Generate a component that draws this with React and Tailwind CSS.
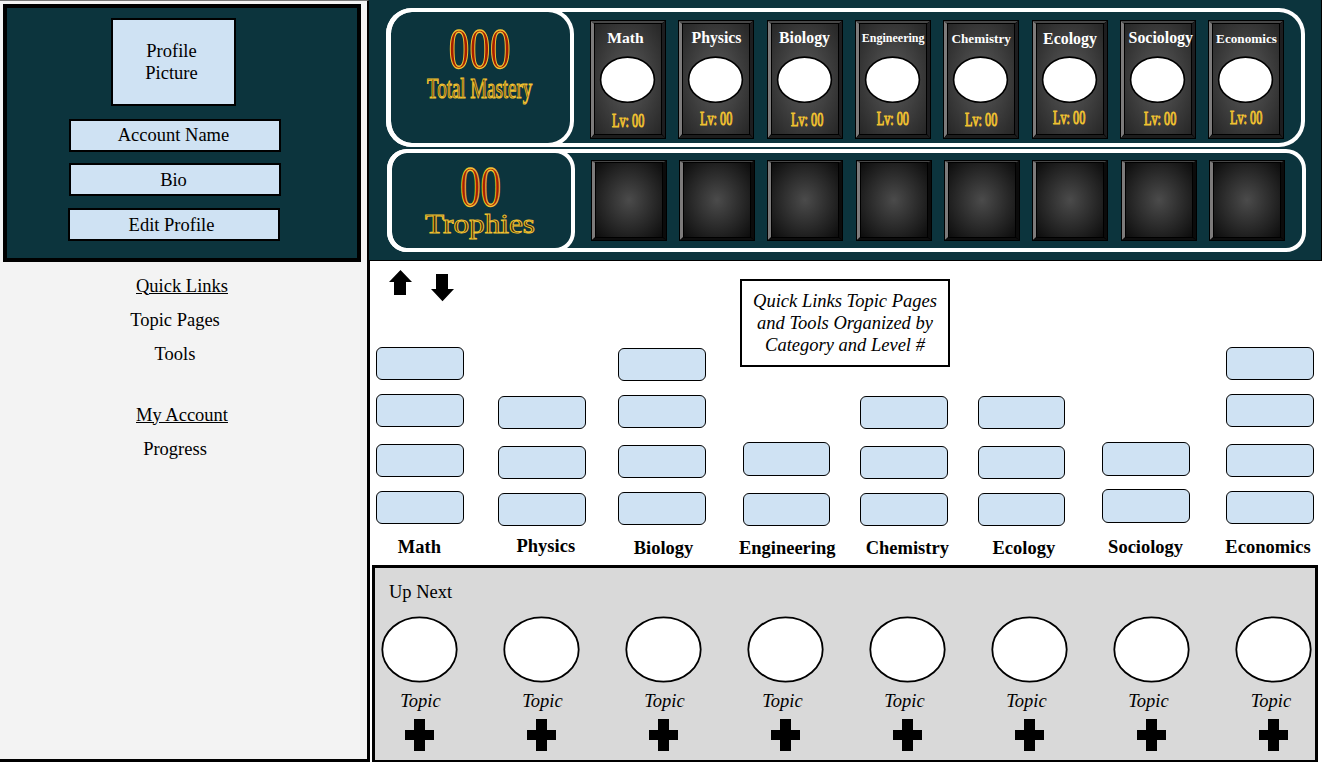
import React from "react";

const BOX = "border-2 border-black bg-[#cfe2f3] text-center";

const SUBJECTS = [
  { name: "Math", gap: "ml-0", label: "text-[15.6px] -left-[2.5px] top-0", lvX: 22, lvY: 106.5 },
  { name: "Physics", gap: "ml-[12px]", label: "text-[15.8px] left-[0.5px] top-0", lvX: 22, lvY: 105 },
  { name: "Biology", gap: "ml-[13px]", label: "text-[15.8px] -left-[0.5px] top-0", lvX: 24, lvY: 106 },
  { name: "Engineering", gap: "ml-[12px]", label: "text-[12px] left-[0.2px] top-0", lvX: 21.7, lvY: 105 },
  { name: "Chemistry", gap: "ml-[12px]", label: "text-[13.2px] left-[0.2px] top-[1px]", lvX: 22, lvY: 106 },
  { name: "Ecology", gap: "ml-[13px]", label: "text-[15.9px] left-0 top-[1px]", lvX: 21, lvY: 104 },
  { name: "Sociology", gap: "ml-[12px]", label: "text-[15.9px] left-[2.8px] top-0", lvX: 24, lvY: 105 },
  { name: "Economics", gap: "ml-[12px]", label: "text-[13.2px] left-[0.5px] top-[1px]", lvX: 22, lvY: 104 },
];

const TROPHY_GAPS = ["ml-0", "ml-[12px]", "ml-[12px]", "ml-[13px]", "ml-[12px]", "ml-[12px]", "ml-[13px]", "ml-[12px]"];

const LEVELS = [
  { name: "Math", col: "ml-0 w-[88px]", boxes: ["mt-0 h-[33px]", "mt-[14px] h-[33px]", "mt-[17px] h-[33px]", "mt-[14px] h-[33px]"], pad: "mb-[5px]", label: "-left-[0.6px] -top-[0.5px]" },
  { name: "Physics", col: "ml-[34px] w-[88px]", boxes: ["h-[33px]", "mt-[17px] h-[33px]", "mt-[14px] h-[33px]"], pad: "mb-[3px]", label: "left-[3.8px] -top-px" },
  { name: "Biology", col: "ml-[32px] w-[88px]", boxes: ["h-[33px]", "mt-[14px] h-[33px]", "mt-[17px] h-[33px]", "mt-[14px] h-[33px]"], pad: "mb-[4px]", label: "left-[1.5px] top-[0.5px]" },
  { name: "Engineering", col: "ml-[37px] w-[87px]", boxes: ["h-[34px]", "mt-[17px] h-[33px]"], pad: "mb-[3px]", label: "left-[0.7px] top-[0.5px]" },
  { name: "Chemistry", col: "ml-[30px] w-[88px]", boxes: ["h-[33px]", "mt-[17px] h-[33px]", "mt-[14px] h-[33px]"], pad: "mb-[3px]", label: "left-[3.3px] top-[0.5px]" },
  { name: "Ecology", col: "ml-[30px] w-[87px]", boxes: ["h-[33px]", "mt-[17px] h-[33px]", "mt-[14px] h-[33px]"], pad: "mb-[3px]", label: "left-[2.3px] top-[0.5px]" },
  { name: "Sociology", col: "ml-[37px] w-[88px]", boxes: ["h-[34px]", "mt-[13px] h-[34px]"], pad: "mb-[6px]", label: "-left-[0.4px] -top-[0.5px]" },
  { name: "Economics", col: "ml-[36px] w-[88px]", boxes: ["h-[33px]", "mt-[14px] h-[33px]", "mt-[17px] h-[33px]", "mt-[14px] h-[33px]"], pad: "mb-[5px]", label: "-left-[2px] -top-[0.5px]" },
];

const TOPIC_SHIFT = ["left-[0.5px]", "left-[0.5px]", "left-[0.5px]", "-left-[3.5px]", "-left-[3.5px]", "-left-[3.5px]", "-left-[3.5px]", "-left-[3px]"];

/* Stretched outline lettering: x/baseline in pixels, sx is the horizontal stretch. */
function WordArt({ x, y, size, sx, fill, sw = 1, children }) {
  return (
    <text
      transform={`translate(${x} ${y}) scale(${sx} 1)`}
      fontSize={size}
      fill={fill}
      stroke="#f1c232"
      strokeWidth={sw}
      vectorEffect="non-scaling-stroke"
      fontFamily="Liberation Serif, serif"
    >
      {children}
    </text>
  );
}

function Bevel({ w, h, t, id, inner, outer, children }) {
  const l = 4;
  return (
    <svg width={w} height={h} className="col-start-1 row-start-1 block">
      <defs>
        <radialGradient id={id} cx="50%" cy="50%" r="70%">
          <stop offset="0" stopColor={inner} />
          <stop offset="1" stopColor={outer} />
        </radialGradient>
      </defs>
      <rect width={w} height={h} fill="#000" />
      <polygon points={`1,1 ${w - 1},1 ${w - l - 1},${t} ${l},${t}`} fill="#474747" />
      <polygon points={`1,1 ${l},${t} ${l},${h - t - 1} 1,${h - 1}`} fill="#7d7b7b" />
      <polygon points={`${w - 1},1 ${w - 1},${h - 1} ${w - l},${h - t - 1} ${w - l},${t}`} fill={t === 4 ? "#1d1d1f" : "#0b0b0b"} />
      <polygon points={`1,${h - 1} ${l},${h - t} ${w - l},${h - t} ${w - 1},${h - 1}`} fill={t === 4 ? "#1c1c1c" : "#0d0d0d"} />
      <rect x={l + 0.5} y={t - 0.5} width={w - 2 * l - 1} height={h - 2 * t} fill={`url(#${id})`} stroke="#000" strokeWidth="1" />
      {children}
    </svg>
  );
}

function SubjectCard({ s }) {
  return (
    <div className={`grid h-[119px] w-[76px] shrink-0 ${s.gap}`}>
      <Bevel w={76} h={119} t={4} id={`card-${s.name}`} inner="#5a5a5a" outer="#262626">
        <ellipse cx="37.5" cy="59.7" rx="26.9" ry="22.6" fill="#fff" stroke="#000" strokeWidth="1.6" />
        <WordArt x={s.lvX} y={s.lvY} size={18} sx={0.68} fill="#d6a522" sw={0.9}>Lv: 00</WordArt>
      </Bevel>
      <div className={`relative col-start-1 row-start-1 flex h-[20px] justify-center pt-[8px] leading-[20px] font-bold whitespace-nowrap text-white ${s.label}`}>
        {s.name}
      </div>
    </div>
  );
}

function Sidebar() {
  return (
    <aside className="flex h-[762px] w-[370px] shrink-0 flex-col border-t border-r-[3px] border-b-[3px] border-t-[#777] border-r-black border-b-black bg-[#f3f3f3]">
      <div className="mt-[2.5px] ml-[3px] flex h-[258.5px] w-[358px] flex-col border-4 border-black bg-[#0c343d] pl-[61px] leading-[22px]">
        <div className={`${BOX} mt-[10px] ml-[43px] h-[88px] w-[125px] pt-[20px] pr-[4px]`}>
          Profile
          <br />
          Picture
        </div>
        <div className={`${BOX} mt-[13px] ml-px h-[33px] w-[212px] pt-[3px] pr-[3px]`}>Account Name</div>
        <div className={`${BOX} mt-[11px] ml-px h-[33px] w-[212px] pt-[4px] pr-[3px]`}>Bio</div>
        <div className={`${BOX} mt-[12px] h-[33px] w-[212px] pt-[4px] pr-[5px]`}>Edit Profile</div>
      </div>
      <nav className="flex w-[350px] flex-col text-center leading-[22px]">
        <a className="mt-[12.5px] pl-[14px] underline">Quick Links</a>
        <a className="mt-[12px]">Topic Pages</a>
        <a className="mt-[12px]">Tools</a>
        <a className="mt-[39px] pl-[14px] underline">My Account</a>
        <a className="mt-[12px]">Progress</a>
      </nav>
    </aside>
  );
}

function Header() {
  return (
    <header className="-ml-px h-[261px] w-[953px] border-r border-b border-black bg-[#0c343d] pt-[8px] pl-[17px]">
      <section className="flex h-[139px] w-[919px] rounded-[26px] border-4 border-l-[5px] border-white">
        <div className="-mx-[5px] -my-[4px] h-[139px] w-[188px] shrink-0 rounded-[26px] border-4 border-l-[5px] border-white">
          <svg width="179" height="131" className="block">
            <WordArt x={57.8} y={56} size={58} sx={0.71} fill="#a61c00" sw={1.15}>000</WordArt>
            <WordArt x={36} y={86.3} size={30} sx={0.63} fill="#5c3c08">Total Mastery</WordArt>
          </svg>
        </div>
        <div className="mt-[8px] ml-[21px] flex">
          {SUBJECTS.map((s) => (
            <SubjectCard key={s.name} s={s} />
          ))}
        </div>
      </section>
      <section className="mt-[2px] ml-px flex h-[103px] w-[919px] rounded-[20px] border-4 border-l-[5px] border-white">
        <div className="-mx-[5px] -my-[4px] h-[103px] w-[188px] shrink-0 rounded-[20px] border-4 border-l-[5px] border-white">
          <svg width="179" height="95" className="block">
            <WordArt x={68} y={53} size={56} sx={0.73} fill="#a61c00" sw={1.15}>00</WordArt>
            <WordArt x={33} y={80.3} size={26.5} sx={1.18} fill="#3f2b08">Trophies</WordArt>
          </svg>
        </div>
        <div className="mt-[7px] ml-[21px] flex">
          {TROPHY_GAPS.map((gap, i) => (
            <div key={i} className={`grid h-[81px] w-[76px] shrink-0 ${gap}`}>
              <Bevel w={76} h={81} t={3} id={`trophy-${i}`} inner="#4b4b4b" outer="#0c0c0c" />
            </div>
          ))}
        </div>
      </section>
    </header>
  );
}

function Levels() {
  return (
    <section className="flex h-[304px] flex-col bg-white pl-[6px]">
      <div className="flex h-[106px] items-start">
        <svg width="24" height="26" className="mt-[9px] ml-[13px] shrink-0">
          <polygon points="11.5,0 23,12 17,12 17,25 5,25 5,12 0,12" />
        </svg>
        <svg width="24" height="28" className="mt-[13px] ml-[18px] shrink-0">
          <polygon points="5,0 17,0 17,15 23,15 11.5,27.2 0,15 5,15" />
        </svg>
        <div className="mt-[18px] ml-[285px] h-[88px] w-[210px] border-2 border-black pt-[8.5px] text-center leading-[22.3px] italic">
          Quick Links Topic Pages
          <br />
          and Tools Organized by
          <br />
          Category and Level #
        </div>
      </div>
      <div className="-mt-[21px] flex h-[212px] items-end">
        {LEVELS.map((l) => (
          <div key={l.name} className={`flex shrink-0 flex-col ${l.col}`}>
            {l.boxes.map((b, i) => (
              <div key={i} className={`rounded-[6px] border border-black bg-[#cfe2f3] ${b}`} />
            ))}
            <div className={l.pad} />
            <div className={`relative mt-[7px] flex h-[22px] justify-center leading-[22px] font-bold whitespace-nowrap ${l.label}`}>
              {l.name}
            </div>
          </div>
        ))}
      </div>
    </section>
  );
}

function UpNext() {
  return (
    <section className="ml-[2px] h-[197px] w-[946px] border-[3px] border-b-2 border-black bg-[#d9d9d9]">
      <h2 className="mt-[13px] ml-[14px] leading-[22px]">Up Next</h2>
      <div className="-ml-[16px] mt-[13px] flex w-[976px]">
        {TOPIC_SHIFT.map((shift, i) => (
          <div key={i} className="flex w-[122px] shrink-0 flex-col items-center">
            <svg width="78" height="68" className="block">
              <ellipse cx="38.5" cy="33.5" rx="37.2" ry="32.2" fill="#fff" stroke="#000" strokeWidth="1.8" />
            </svg>
            <div className={`relative mt-[6px] leading-[22px] italic ${shift}`}>Topic</div>
            <svg width="30" height="32" className="mt-[7px] block">
              <path d="M9 0h11v11h9v10h-9v11h-11v-11h-9v-10h9z" />
            </svg>
          </div>
        ))}
      </div>
    </section>
  );
}

export default function App() {
  return (
    <div className="flex h-[762px] w-[1323px] overflow-hidden bg-white font-['Liberation_Serif',serif] text-[18.5px] text-black">
      <Sidebar />
      <main className="flex w-[953px] flex-col">
        <Header />
        <Levels />
        <UpNext />
      </main>
    </div>
  );
}
